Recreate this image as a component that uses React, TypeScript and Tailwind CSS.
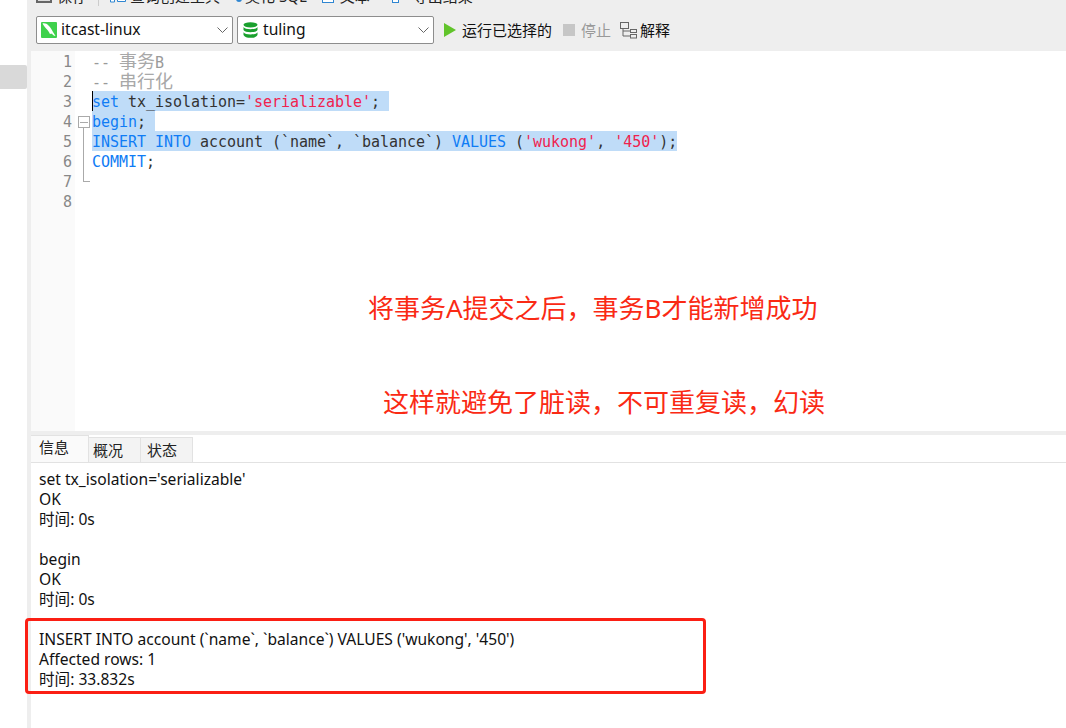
import React from "react";

const mono = "font-['DejaVu_Sans_Mono','Noto_Sans_CJK_SC',monospace]";

function K({ children }: { children: React.ReactNode }) {
  return <span className="text-[#0f7cf5]">{children}</span>;
}
function S({ children }: { children: React.ReactNode }) {
  return <span className="text-[#f0224e]">{children}</span>;
}

function Dolphin() {
  return (
    <svg width="16" height="16" viewBox="0 0 16 16" className="shrink-0">
      <rect width="16" height="16" rx="1" fill="#3fd14c" />
      <path d="M1.500 1.500c2.500-.5 4.500.5 6 2 2 2 3.500 4.500 4.500 6.500l2.500 4c-1.500 0-3-1-3.500-2.500-.5.5-1.500.5-2.500 0 0-1-1-2-2-3.500C5 6.500 3 4.500 1.500 1.500z" fill="#fff" />
    </svg>
  );
}

function Db() {
  return (
    <svg width="15" height="16" viewBox="0 0 15 16" className="shrink-0 mx-[1px]">
      <ellipse cx="7.5" cy="2.8" rx="7" ry="2.6" fill="#1aa02e" />
      <path d="M.5 5c1 1.600 3.500 2.200 7 2.200s6-.6 7-2.200v3c-1 1.600-3.500 2.200-7 2.200S1.500 9.600.5 8z" fill="#1aa02e" />
      <path d="M.5 10.200c1 1.600 3.500 2.200 7 2.200s6-.6 7-2.200V13c-1 2-3.500 2.800-7 2.800S1.500 15 .5 13z" fill="#1aa02e" />
    </svg>
  );
}

function Chevron() {
  return (
    <svg width="11" height="6" viewBox="0 0 11 6" className="shrink-0">
      <path d="M.5.5l5 5 5-5" fill="none" stroke="#666" strokeWidth="1" />
    </svg>
  );
}

function Select({ icon, label }: { icon: React.ReactNode; label: string }) {
  return (
    <div className="w-[197px] h-7 flex items-center gap-1 pl-1 pr-1 bg-white border border-[#8d8d8d] rounded-[2px]">
      {icon}
      <span className="flex-1 text-[15.6px] text-[#111]">{label}</span>
      <Chevron />
    </div>
  );
}

const codeLines: React.ReactNode[] = [
  <span className="text-[#9a9a9a]">
    -- <span className="text-[18px] text-[#a8a8a8]">事务</span>B
  </span>,
  <span className="text-[#9a9a9a]">
    -- <span className="text-[18px] text-[#a8a8a8]">串行化</span>
  </span>,
  <span className="bg-[#bfdcf8] h-5 pr-[9px]">
    <K>set</K> tx_isolation=<S>'serializable'</S>;
  </span>,
  <span className="bg-[#bfdcf8] h-5 pr-[9px]">
    <K>begin</K>;
  </span>,
  <span className="bg-[#bfdcf8] h-5">
    <K>INSERT</K> <K>INTO</K> account (`name`, `balance`) <K>VALUES</K> (<S>'wukong'</S>, <S>'450'</S>);
  </span>,
  <span>
    <K>COMMIT</K>;
  </span>,
  <span />,
  <span />,
];

function InfoBlock({ lines, cls = "" }: { lines: string[]; cls?: string }) {
  return (
    <div className={cls}>
      {lines.map((l) => (
        <div key={l} className="h-5 leading-5">
          {l}
        </div>
      ))}
    </div>
  );
}

export default function App() {
  return (
    <div className="w-[1066px] h-[728px] overflow-hidden flex bg-white font-['Noto_Sans','Noto_Sans_CJK_SC',sans-serif] text-[#111]">
      {/* left navigator */}
      <div className="w-[27px] shrink-0 pt-[65px] bg-white">
        <div className="h-6 bg-[#d9d9d9] rounded-r-[2px]" />
      </div>
      <div className="w-1 shrink-0 bg-[#eeeeee]" />

      <div className="flex-1 min-w-0 flex flex-col relative">
        {/* toolbars */}
        <div className="h-[51px] shrink-0 bg-[#eeeeee] overflow-hidden flex flex-col">
          <div className="h-4 -mt-3 shrink-0 flex items-center pl-[5px] text-[15px] text-[#222] whitespace-nowrap">
            <span className="w-4 h-[14px] border-2 border-[#666] bg-[#ddd] mr-[5px]" />
            <span className="mr-[11px]">保存</span>
            <span className="w-px h-5 bg-[#ccc] mr-[11px]" />
            <svg width="16" height="14" viewBox="0 0 16 14" className="mr-[4px]">
              <path d="M.5 6h4v7h-4zM7.500.5h6l2 2v10h-8z" fill="#fff" stroke="#2f86d1" />
            </svg>
            <span className="mr-[8px]">查询创建工具</span>
            <svg width="15" height="14" viewBox="0 0 15 14" className="mr-[2px]">
              <path d="M0 4h8M0 7h8M0 10h6" stroke="#aaa" />
              <circle cx="11" cy="10" r="3" fill="#2f86d1" />
            </svg>
            <span className="mr-[15px]">美化 SQL</span>
            <span className="w-3 h-[14px] border border-[#2f86d1] bg-white mr-[6px]" />
            <span className="mr-[22px]">文本</span>
            <svg width="14" height="14" viewBox="0 0 14 14" className="mr-[7px]">
              <rect x=".5" y="6" width="6" height="7.500" fill="#fff" stroke="#2f86d1" />
              <path d="M7 4h4V0l3 5-3 5V7H7z" fill="#ef9a26" />
            </svg>
            <span>导出结果</span>
          </div>
          <div className="h-7 mt-3 shrink-0 flex items-center pl-[5px] text-[15px]">
            <Select icon={<Dolphin />} label="itcast-linux" />
            <div className="w-1" />
            <Select icon={<Db />} label="tuling" />
            <svg width="12" height="14" viewBox="0 0 12 14" className="ml-[10px] mr-[6px]">
              <path d="M0 0l12 7-12 7z" fill="#61c42b" />
            </svg>
            <span className="mr-[11px]">运行已选择的</span>
            <span className="w-3 h-3 bg-[#c6c6c6] mr-[6px]" />
            <span className="text-[#999] mr-[9px]">停止</span>
            <svg width="17" height="17" viewBox="0 0 17 17" className="mr-[3px]">
              <g fill="none" stroke="#666" strokeWidth="1">
                <rect x=".5" y=".5" width="8" height="6" />
                <rect x="10.500" y="7.500" width="6" height="3" />
                <rect x="10.500" y="12.500" width="6" height="3.500" />
                <path d="M3 7v7h7M3 9h7" />
              </g>
            </svg>
            <span>解释</span>
          </div>
        </div>

        {/* editor */}
        <div className={`h-[380px] shrink-0 flex ${mono} text-[15px] tracking-[-0.03px] text-[#333]`}>
          <div className="w-[44px] shrink-0 bg-[#fafafa] relative">
            {codeLines.map((_, i) => (
              <div key={i} className="h-5 leading-[22px] text-right pr-[3px] text-[#888]">
                {i + 1}
              </div>
            ))}
            <div className="absolute left-[47px] top-[65px] w-3 h-3 border border-[#aaa] bg-white flex items-center justify-center">
              <span className="w-2 h-px bg-[#aaa]" />
            </div>
          </div>
          <div className="flex-1 pl-[17px] relative whitespace-pre">
            {codeLines.map((l, i) => (
              <div key={i} className="h-5 flex leading-[22px]">
                {l}
              </div>
            ))}
            <div className="absolute left-[8px] top-[77px] w-[7px] h-[54px] border-l border-b border-[#aaa]" />
            <div className="absolute left-[17px] top-[40px] w-px h-5 bg-black" />
          </div>
        </div>

        <div className="h-1 shrink-0 bg-[#eeeeee]" />

        {/* tabs */}
        <div className="h-[28px] shrink-0 flex items-end border-b border-[#e2e2e2] text-[15px] text-[#222]">
          <div className="w-[58px] h-[27px] border-t border-r border-[#e2e2e2] flex items-center pl-2 pb-[3px] bg-[#fafafa]">信息</div>
          <div className="w-[52px] h-[25px] border-t border-r border-[#e2e2e2] bg-[#f3f3f3] flex items-center pl-1">概况</div>
          <div className="w-[52px] h-[25px] border-t border-r border-[#e2e2e2] bg-[#f3f3f3] flex items-center pl-[6px]">状态</div>
        </div>

        {/* info */}
        <div className="flex-1 pt-[6px] pl-2 text-[15.6px]">
          <InfoBlock lines={["set tx_isolation='serializable'", "OK", "时间: 0s"]} cls="mb-5" />
          <InfoBlock lines={["begin", "OK", "时间: 0s"]} cls="mb-5" />
          <InfoBlock lines={["INSERT INTO account (`name`, `balance`) VALUES ('wukong', '450')", "Affected rows: 1", "时间: 33.832s"]} />
        </div>

        {/* annotations */}
        <div className="absolute left-[337px] top-[292px] text-[26px] leading-8 text-[#fa2a14] whitespace-nowrap">将事务A提交之后，事务B才能新增成功</div>
        <div className="absolute left-[352px] top-[386px] text-[26px] leading-8 text-[#fa2a14] whitespace-nowrap">这样就避免了脏读，不可重复读，幻读</div>
        <div className="absolute left-[-6px] top-[618px] w-[681px] h-[76px] border-[3px] border-[#fb1f14] rounded-[4px]" />
      </div>
    </div>
  );
}
